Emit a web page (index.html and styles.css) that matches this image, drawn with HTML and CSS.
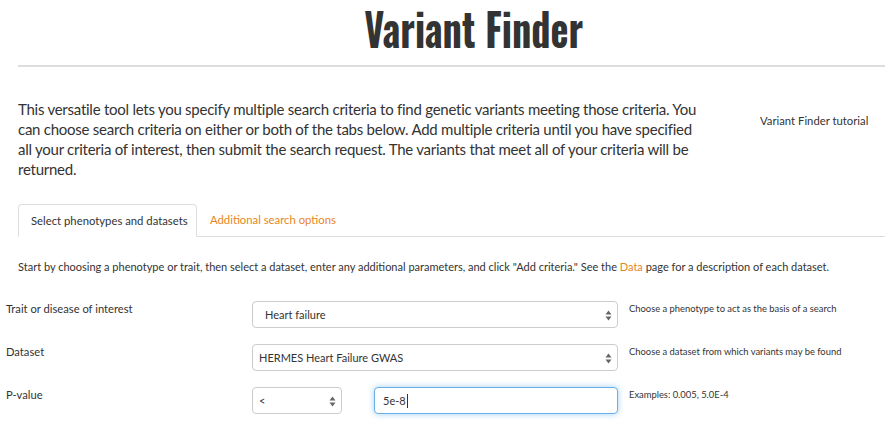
FILE: index.html
```html
<!DOCTYPE html>
<html>
<head>
<meta charset="utf-8">
<link rel="stylesheet" href="styles.css">
</head>
<body>
<div class="page">
  <h1 class="title"><span class="title-text">Variant Finder</span></h1>
  <hr class="rule">
  <div class="intro">
    <p class="intro-text">This versatile tool lets you specify multiple search criteria to find genetic variants meeting those criteria. You can choose search criteria on either or both of the tabs below. Add multiple criteria until you have specified all your criteria of interest, then submit the search request. The variants that meet all of your criteria will be returned.</p>
    <a class="tutorial">Variant Finder tutorial</a>
  </div>
  <div class="tabs">
    <div class="tab active">Select phenotypes and datasets</div>
    <div class="tab link">Additional search options</div>
    <div class="tab-fill"></div>
  </div>
  <p class="instructions">Start by choosing a phenotype or trait, then select a dataset, enter any additional parameters, and click "Add criteria." See the <a class="orange">Data</a> page for a description of each dataset.</p>
  <div class="form">
    <div class="row">
      <div class="label">Trait or disease of interest</div>
      <div class="control">
        <div class="select wide"><span class="val pad-l">Heart failure</span><svg class="arrows" width="7" height="11" viewBox="0 0 7 11"><path d="M3.5 0.5 L6.5 4.5 H0.5 Z M3.5 10.5 L6.5 6.5 H0.5 Z" fill="#666"/></svg></div>
      </div>
      <div class="help">Choose a phenotype to act as the basis of a search</div>
    </div>
    <div class="row">
      <div class="label">Dataset</div>
      <div class="control">
        <div class="select wide"><span class="val">HERMES Heart Failure GWAS</span><svg class="arrows" width="7" height="11" viewBox="0 0 7 11"><path d="M3.5 0.5 L6.5 4.5 H0.5 Z M3.5 10.5 L6.5 6.5 H0.5 Z" fill="#666"/></svg></div>
      </div>
      <div class="help">Choose a dataset from which variants may be found</div>
    </div>
    <div class="row">
      <div class="label">P-value</div>
      <div class="control split">
        <div class="select small"><span class="val">&lt;</span><svg class="arrows" width="7" height="11" viewBox="0 0 7 11"><path d="M3.5 0.5 L6.5 4.5 H0.5 Z M3.5 10.5 L6.5 6.5 H0.5 Z" fill="#666"/></svg></div>
        <div class="input focused"><span class="val">5e-8</span><span class="caret"></span></div>
      </div>
      <div class="help">Examples: 0.005, 5.0E-4</div>
    </div>
  </div>
</div>
</body>
</html>
```

FILE: styles.css
```css
html, body {
  margin: 0;
  padding: 0;
  background: #fff;
  overflow: hidden;
}
body {
  font-family: Lato, "Open Sans", sans-serif;
  color: #333;
}
.page {
  width: 885px;
}
.title {
  margin: 0;
  padding: 0 0 0 62px;
  height: 65px;
  box-sizing: border-box;
  text-align: center;
  font-family: Oswald, "DejaVu Sans Condensed", sans-serif;
  font-weight: bold;
  font-size: 45px;
  line-height: 56px;
  color: #333;
}
.title-text {
  display: inline-block;
  transform: scaleX(0.85);
  transform-origin: center;
}
.rule {
  margin: 0 0 0 18px;
  border: 0;
  height: 2px;
  background: #ddd;
}
.intro {
  display: flex;
  padding: 32px 0 0 18px;
  height: 137px;
  box-sizing: border-box;
}
.intro-text {
  margin: 0;
  width: 686px;
  font-size: 15px;
  letter-spacing: -0.25px;
  line-height: 20px;
}
.tutorial {
  margin: 15px 0 0 56px;
  font-size: 11.3px;
  line-height: 14px;
  color: #333;
}
.tabs {
  display: flex;
  margin-left: 18px;
  height: 33px;
}
.tab {
  font-size: 11.3px;
  line-height: 14px;
  padding: 9px 13px 0;
  box-sizing: border-box;
  border-bottom: 1px solid #ddd;
  white-space: nowrap;
}
.tab.active {
  border: 1px solid #ddd;
  border-bottom-color: transparent;
  border-radius: 4px 4px 0 0;
  width: 179px;
  padding-left: 12px;
  color: #333;
}
.tab.link {
  color: #e8861d;
}
.tab-fill {
  flex: 1;
  border-bottom: 1px solid #ddd;
}
.instructions {
  margin: 23px 0 0 18px;
  font-size: 11px;
  line-height: 14px;
  white-space: nowrap;
}
.orange {
  color: #e8861d;
}
.form {
  margin-top: 27px;
  padding-left: 6px;
}
.row {
  display: flex;
  height: 43px;
}
.label {
  width: 246px;
  font-size: 11.2px;
  line-height: 14px;
  padding-top: 1px;
}
.control {
  width: 377px;
}
.control.split {
  display: flex;
  gap: 32px;
}
.select, .input {
  position: relative;
  height: 27px;
  box-sizing: border-box;
  border: 1px solid #ccc;
  border-radius: 4px;
  background: #fff;
  display: flex;
  align-items: center;
  font-size: 11px;
  color: #333;
  padding-left: 6px;
}
.select.wide {
  width: 366px;
}
.select.small {
  width: 90px;
}
.val.pad-l {
  padding-left: 6px;
}
.arrows {
  position: absolute;
  right: 5px;
  top: 8px;
}
.input {
  width: 244px;
  padding-left: 8px;
}
.input.focused {
  border-color: #66afe9;
  box-shadow: 0 0 6px rgba(102, 175, 233, 0.6);
}
.caret {
  display: inline-block;
  width: 1px;
  height: 14px;
  background: #333;
  margin-left: 1px;
}
.help {
  font-size: 9.4px;
  line-height: 12px;
  padding-top: 2px;
  color: #333;
}
```
